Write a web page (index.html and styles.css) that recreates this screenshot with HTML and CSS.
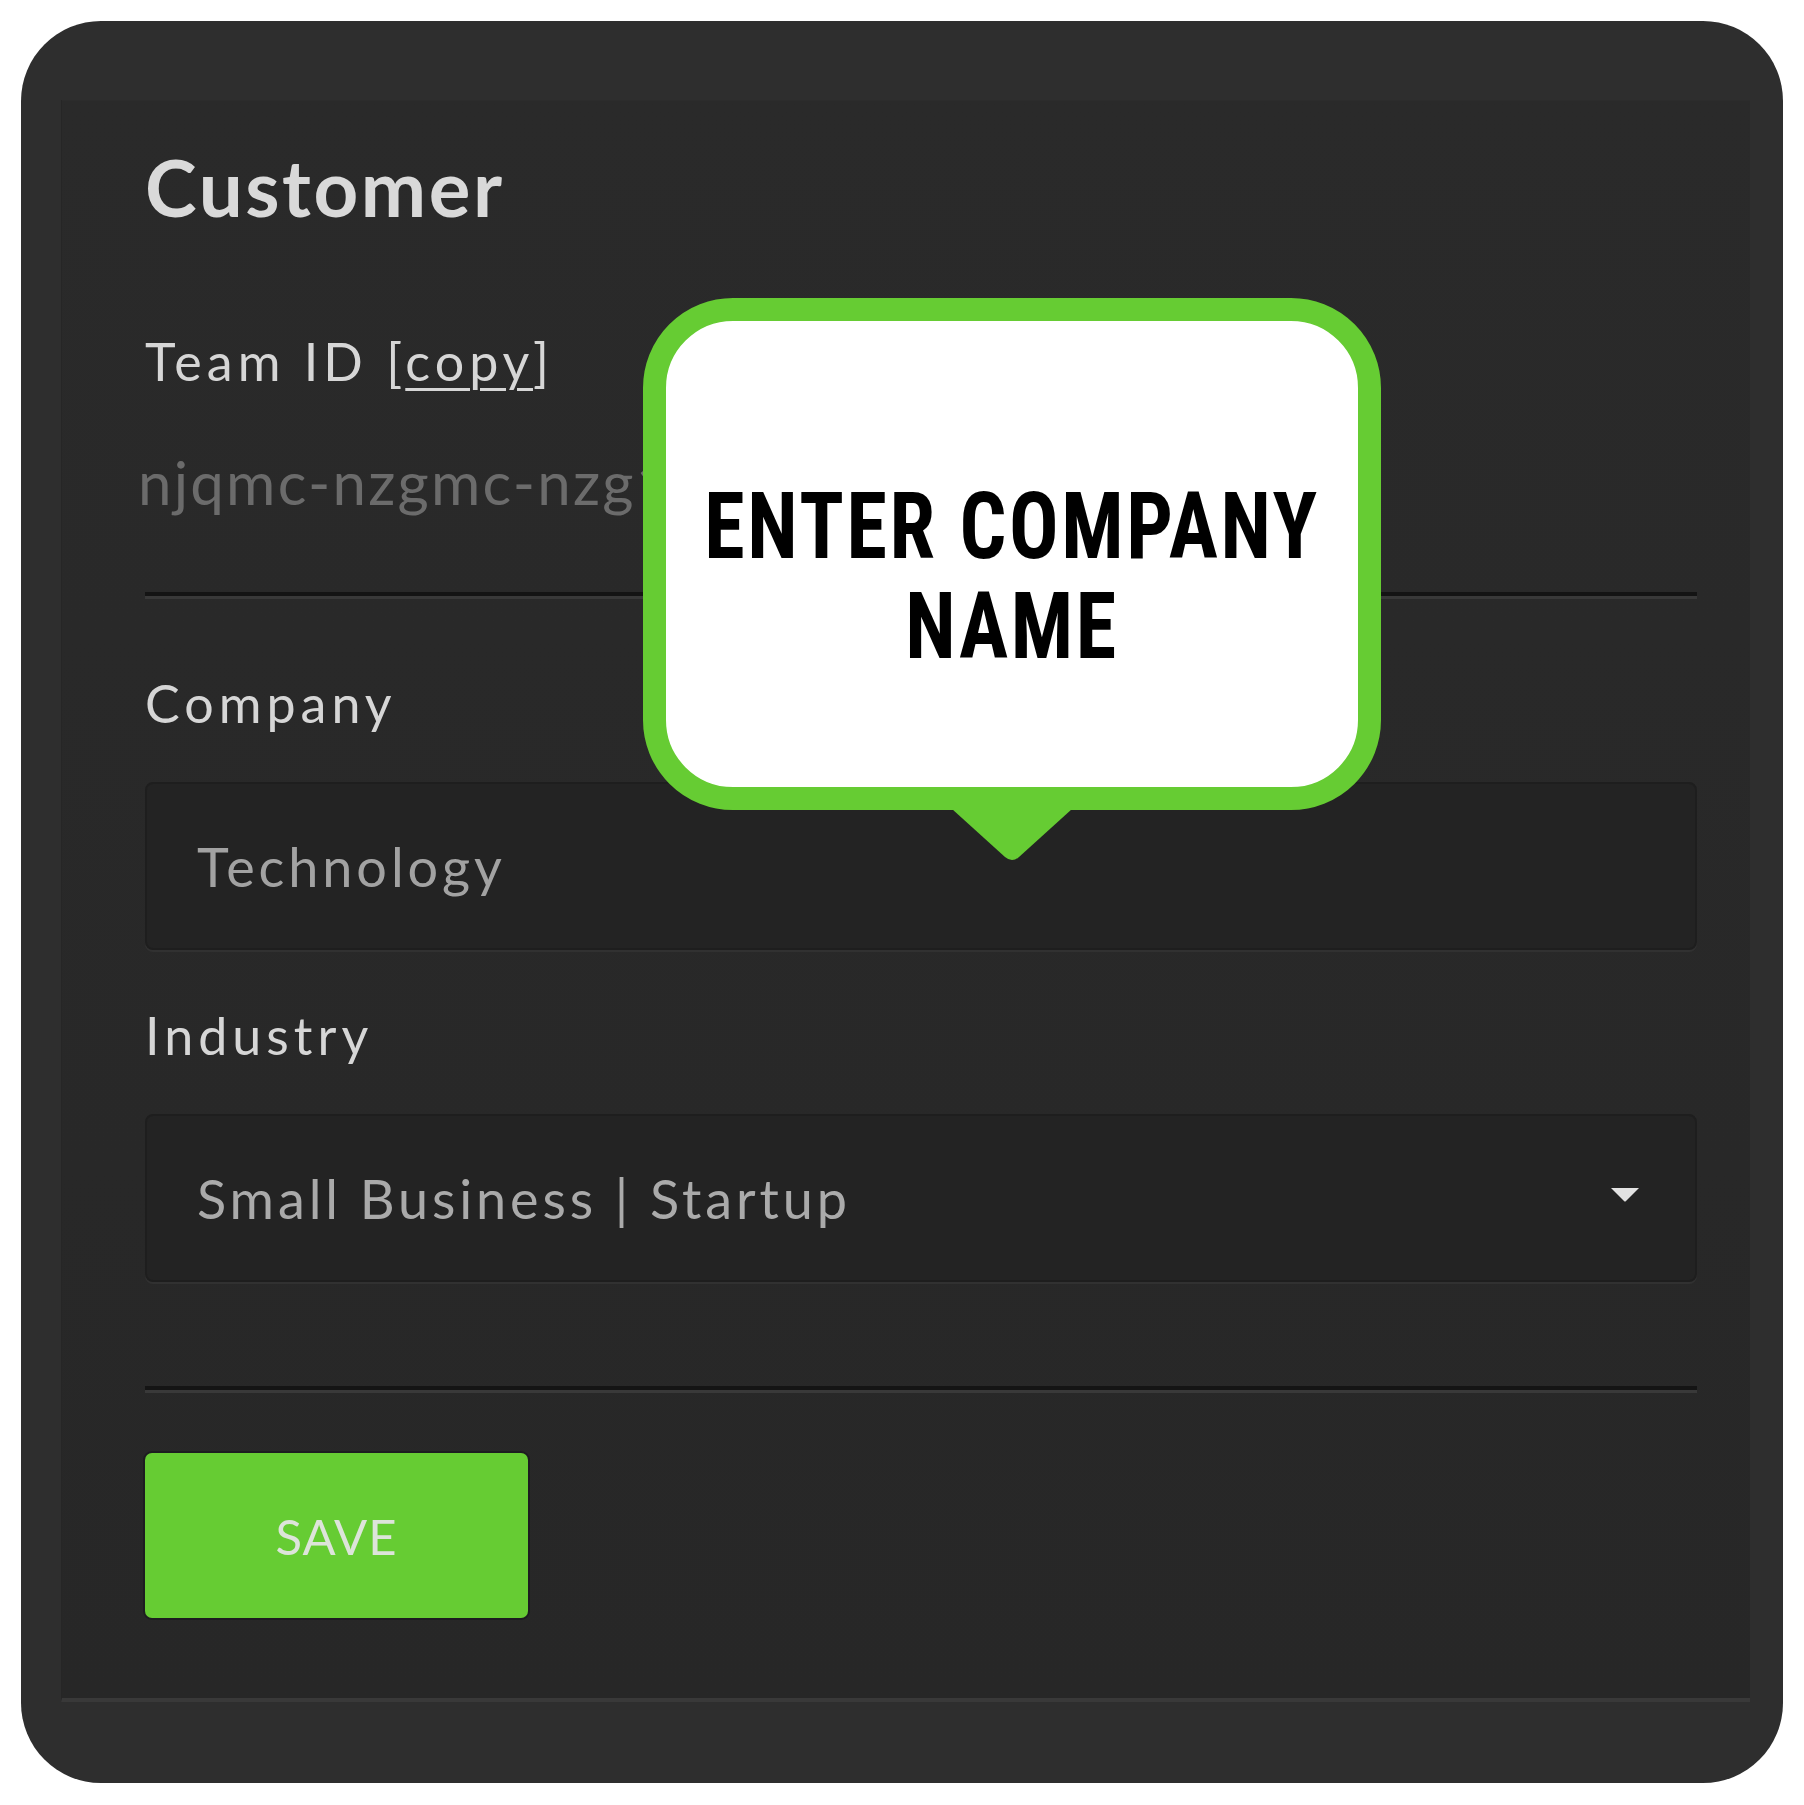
FILE: index.html
```html
<!DOCTYPE html>
<html lang="en">
<head>
<meta charset="utf-8">
<title>Customer</title>
<link rel="stylesheet" href="styles.css">
</head>
<body>
<div class="card">
  <section class="panel">
    <h1 class="title">Customer</h1>

    <div class="label label-team">Team ID [<span class="copy">copy</span>]</div>
    <div class="team-id">njqmc-nzgmc-nzg1mjq-ymtm</div>

    <div class="divider divider-top"></div>

    <div class="label label-company">Company</div>
    <div class="field field-company">
      <span class="field-text">Technology</span>
    </div>

    <div class="label label-industry">Industry</div>
    <div class="field field-select">
      <span class="field-text">Small Business | Startup</span>
      <svg class="caret" viewBox="0 0 30 15" width="30" height="15" aria-hidden="true">
        <path d="M1 1 H29 L16 14 Q15 15 14 14 Z" fill="#e2e2e2"/>
      </svg>
    </div>

    <div class="divider divider-bottom"></div>

    <button class="save" type="button">SAVE</button>

    <div class="bubble">
      <p class="bubble-text"><span class="bubble-line">ENTER COMPANY</span><span class="bubble-line">NAME</span></p>
      <svg class="bubble-tail" viewBox="0 0 120 54" width="120" height="54" aria-hidden="true">
        <path d="M0 0 H120 L67 48 Q60 54 53 48 Z" fill="#66cc33"/>
      </svg>
    </div>
  </section>
</div>
</body>
</html>
```

FILE: styles.css
```css
* {
  box-sizing: border-box;
}

html, body {
  margin: 0;
  padding: 0;
  background: #ffffff;
}

body {
  font-family: "Lato", "Open Sans", sans-serif;
}

.card {
  margin: 21px;
  width: 1762px;
  height: 1762px;
  border-radius: 80px;
  background: #2e2e2e;
  padding: 79px 33px 81px 40px;
  display: flex;
  flex-direction: column;
}

.panel {
  position: relative;
  flex: 1;
  background: linear-gradient(180deg, #2a2a2a 0%, #272727 100%);
  border-bottom: 4px solid #393939;
  border-left: 1px solid #262626;
  box-shadow: inset 0 1px 0 #2c2c2c;
  padding: 40px 53px 0 83px;
  display: flex;
  flex-direction: column;
}

.title {
  margin: 0;
  font-size: 78px;
  line-height: 94px;
  font-weight: 700;
  letter-spacing: 2.6px;
  color: #d9d9d9;
}

.label {
  font-size: 52px;
  line-height: 62px;
  font-weight: 400;
  letter-spacing: 5px;
  color: #d6d6d6;
}

.label-team {
  margin-top: 96px;
}

.copy {
  text-decoration: underline;
  text-decoration-thickness: 3px;
  text-underline-offset: 7px;
}

.team-id {
  margin-top: 54px;
  margin-left: -7px;
  font-size: 60px;
  line-height: 72px;
  letter-spacing: 2.2px;
  color: #6b6b6b;
  white-space: nowrap;
}

.divider {
  height: 7px;
  border-top: 4px solid #141414;
  border-bottom: 3px solid #393939;
}

.divider-top {
  margin-top: 74px;
}

.label-company {
  margin-top: 73px;
}

.label-industry {
  margin-top: 54px;
}

.field {
  margin-top: 48px;
  height: 168px;
  background: #232323;
  border: 2px solid #1e1e1e;
  border-radius: 8px;
  box-shadow: 0 2px 0 #313131;
  padding: 0 55px 0 50px;
  display: flex;
  align-items: center;
  justify-content: space-between;
}

.field-text {
  font-size: 54px;
  line-height: 65px;
  letter-spacing: 3.9px;
  color: #a2a2a2;
}

.field-select .field-text {
  color: #aaaaaa;
}

.caret {
  display: block;
  margin-top: -8px;
}

.divider-bottom {
  margin-top: 104px;
}

.save {
  margin-top: 60px;
  width: 383px;
  height: 165px;
  border: none;
  border-radius: 7px;
  background: #66cc33;
  box-shadow: 0 0 0 2px #1d1d20;
  font-family: "Lato", "Open Sans", sans-serif;
  font-size: 49px;
  font-weight: 400;
  color: #dde4da;
  letter-spacing: 1px;
  padding: 0;
}

.bubble {
  position: absolute;
  left: 581px;
  top: 198px;
  width: 738px;
  height: 512px;
  border: 23px solid #66cc33;
  border-radius: 90px;
  background: #ffffff;
  padding-top: 156px;
}

.bubble-text {
  margin: 0;
  display: flex;
  flex-direction: column;
  align-items: center;
  font-family: "Roboto Condensed", "DejaVu Sans Condensed", "Liberation Sans Narrow", "Roboto", sans-serif;
  font-stretch: condensed;
  font-weight: 700;
  font-size: 93px;
  line-height: 100px;
  letter-spacing: 3px;
  color: #000000;
  transform: scaleX(0.885);
  transform-origin: center top;
}

.bubble-line {
  display: block;
  white-space: nowrap;
}

.bubble-tail {
  position: absolute;
  left: 286px;
  top: calc(100% + 22px);
  display: block;
}
```
